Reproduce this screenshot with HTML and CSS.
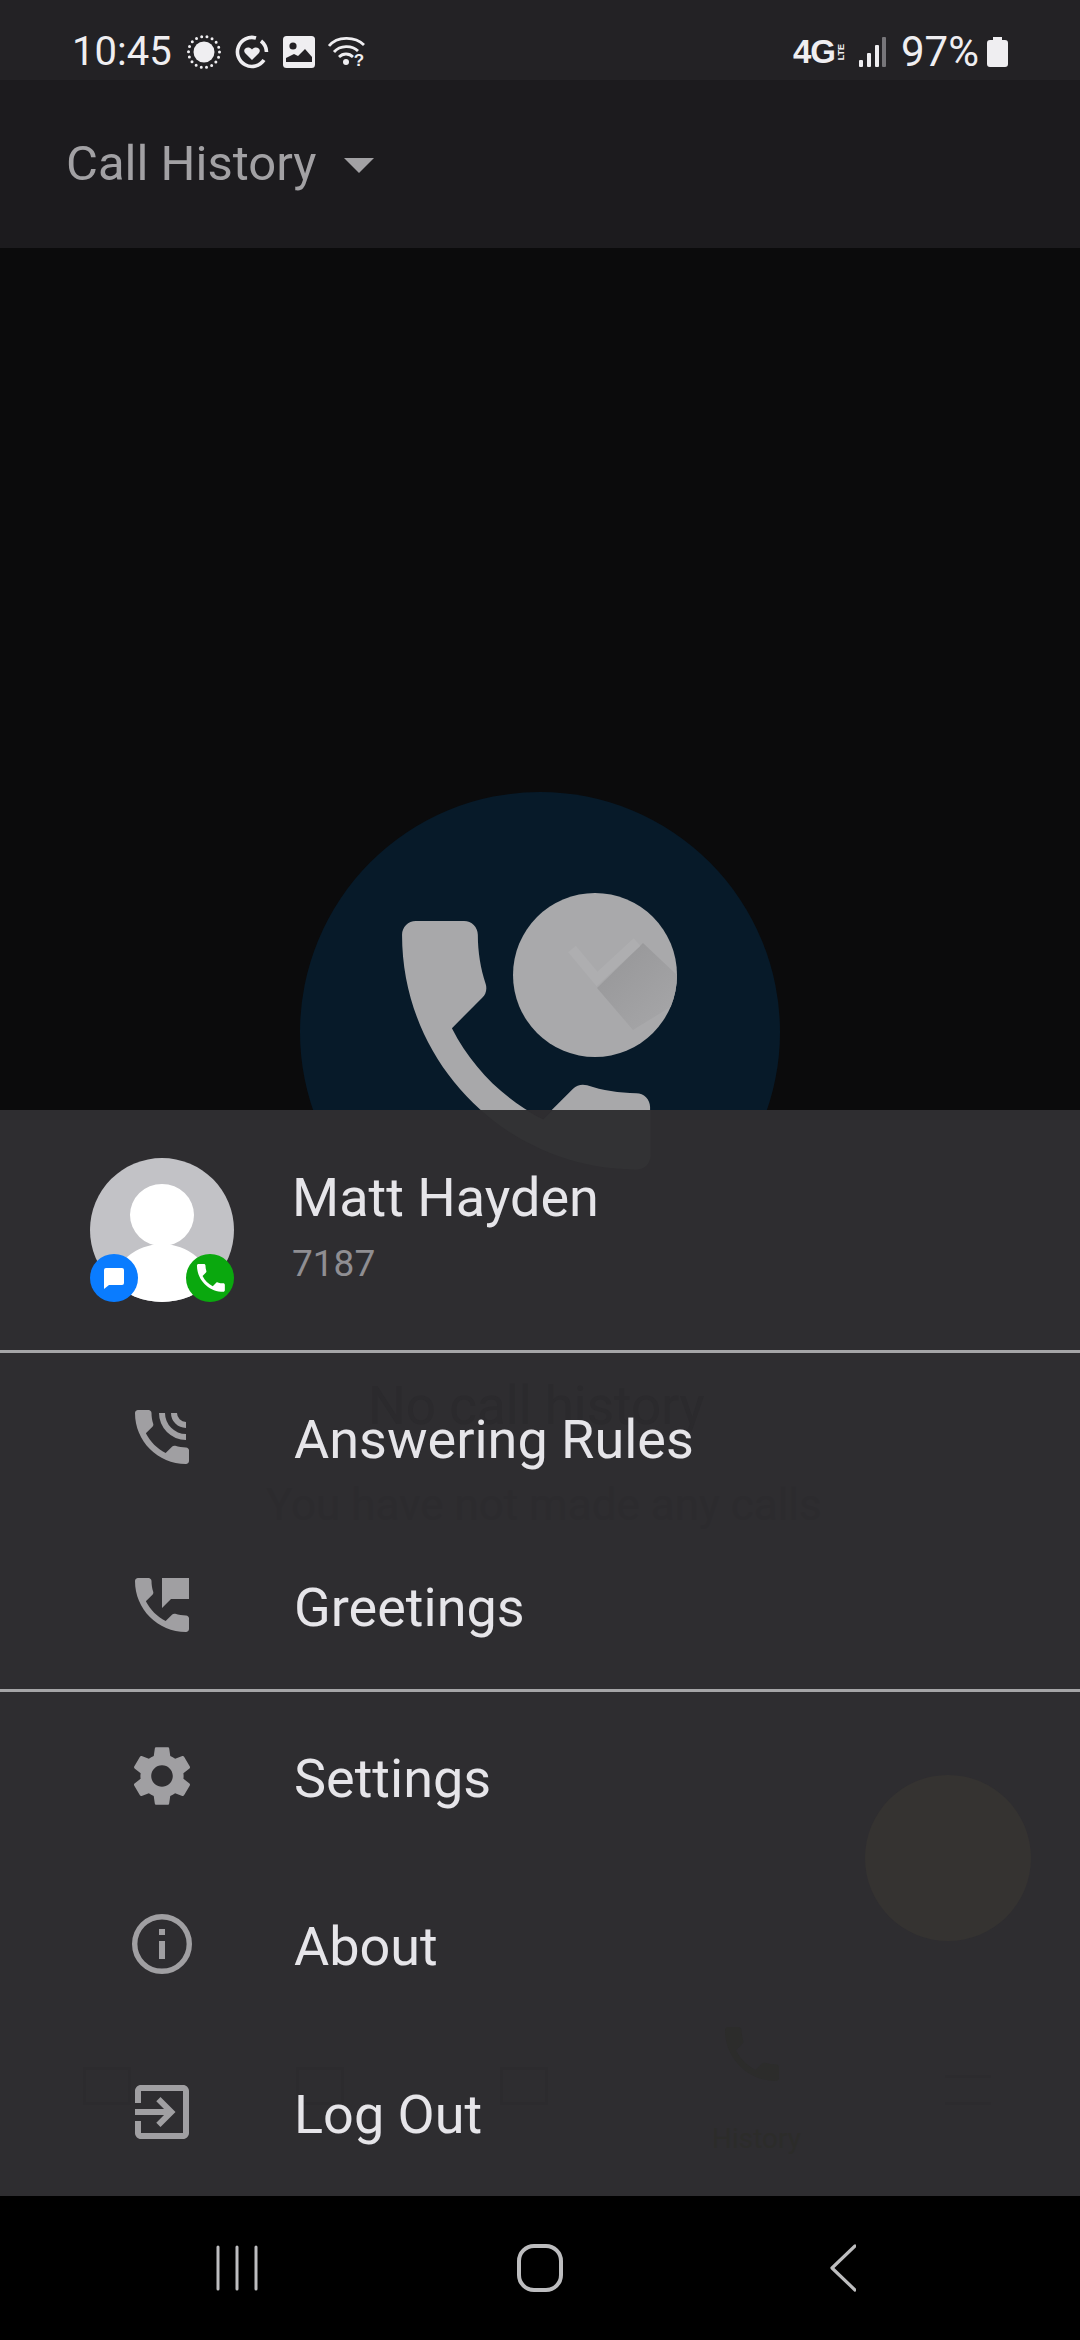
FILE: index.html
```html
<!DOCTYPE html>
<html lang="en">
<head>
<meta charset="utf-8">
<title>Call History</title>
<link rel="stylesheet" href="styles.css">
</head>
<body>
<div class="app">
  <div class="status">
    <div class="status-left">
      <span class="time">10:45</span>
      <svg class="st-sun" viewBox="0 0 36 36"><circle cx="18" cy="18" r="10.5" fill="#efeef1"/><circle cx="18" cy="18" r="15.5" fill="none" stroke="#efeef1" stroke-width="3" stroke-linecap="round" stroke-dasharray="0 5.4"/></svg>
      <svg class="st-heart" viewBox="0 0 36 36"><path d="M30 26A14.500 14.500 0 1 1 22 4" fill="none" stroke="#efeef1" stroke-width="3.600"/><path d="M27 7A14.500 14.500 0 0 1 32.500 18" fill="none" stroke="#efeef1" stroke-width="3.600"/><path d="M18 26l-7-7c-3-4 3-8 7-3.600 4-4.400 10-.4 7 3.600z" fill="#efeef1"/></svg>
      <svg class="st-img" viewBox="0 0 34 34"><rect x="1" y="1" width="32" height="32" rx="3.500" fill="#efeef1"/><circle cx="11" cy="11" r="3.600" fill="#232125"/><path d="M4 27v-4l8-4 4 2 7-7 7 8v5z" fill="#232125"/><path d="M4 27.500h26" stroke="#efeef1" stroke-width="1"/></svg>
      <svg class="st-wifi" viewBox="0 0 38 34"><g fill="none" stroke="#efeef1" stroke-width="2.800"><path d="M1 11C9 1 27 1 36 10"/><path d="M6 17C12 10 24 10 30 16"/><path d="M11 22C15 18 21 18 25 22"/></g><circle cx="18" cy="27" r="3" fill="#efeef1"/><text class="wifi-q" x="31" y="31">?</text></svg>
    </div>
    <div class="status-right">
      <span class="net"><span class="net-4g">4G</span><span class="net-lte">LTE</span></span>
      <svg class="st-bars" viewBox="0 0 27 30"><rect x="0" y="23" width="4" height="7" rx="1" fill="#efeef1"/><rect x="8" y="16" width="4" height="14" rx="1" fill="#efeef1"/><rect x="16" y="8" width="4" height="22" rx="1" fill="#efeef1"/><rect x="23" y="0" width="4" height="30" rx="1" fill="#77767a"/></svg>
      <span class="batt-pct">97%</span>
      <svg class="st-batt" viewBox="0 0 21 30"><path d="M6 0h9v3h3a3 3 0 0 1 3 3v21a3 3 0 0 1-3 3H3a3 3 0 0 1-3-3V6a3 3 0 0 1 3-3h3z" fill="#efeef1"/></svg>
    </div>
  </div>
  <header class="header">
    <span class="title">Call History</span>
    <span class="caret"></span>
  </header>
  <main class="main">
    <svg class="hero" viewBox="0 0 480 480">
      <defs>
        <clipPath id="clock"><circle cx="295" cy="183" r="82"/></clipPath>
        <linearGradient id="shade" x1="0" y1="0" x2="1" y2="1"><stop offset="0" stop-color="#959597"/><stop offset="1" stop-color="#a9a9ab"/></linearGradient>
      </defs>
      <circle cx="240" cy="240" r="240" fill="#071a29"/>
      <path transform="translate(60.700 87.600) scale(13.780)" fill="#a8a8aa" d="M20 15.500c-1.250 0-2.450-.2-3.570-.57-.35-.11-.74-.03-1.020.24l-2.200 2.200c-2.830-1.440-5.150-3.750-6.590-6.590l2.200-2.210c.28-.26.36-.65.25-1-.37-1.120-.57-2.320-.57-3.570 0-.55-.45-1-1-1H4c-.55 0-1 .45-1 1 0 9.390 7.610 17 17 17 .55 0 1-.45 1-1v-3.500c0-.55-.45-1-1-1z"/>
      <circle cx="295" cy="183" r="82" fill="#a9a9ab"/>
      <g clip-path="url(#clock)">
        <polygon points="297,196 343,151 395,200 333,238" fill="url(#shade)"/>
        <polyline points="272,157 297,187 337,150" fill="none" stroke="#aeaeb0" stroke-width="10"/>
      </g>
    </svg>
    <section class="sheet">
      <div class="ghosts" aria-hidden="true">
        <svg class="ghost-phone" viewBox="0 0 24 24"><path fill="#323234" d="M20 15.500c-1.250 0-2.450-.2-3.570-.57-.35-.11-.74-.03-1.020.24l-2.200 2.200c-2.830-1.440-5.150-3.750-6.590-6.590l2.200-2.210c.28-.26.36-.65.25-1-.37-1.120-.57-2.320-.57-3.570 0-.55-.45-1-1-1H4c-.55 0-1 .45-1 1 0 9.390 7.610 17 17 17 .55 0 1-.45 1-1v-3.500c0-.55-.45-1-1-1z"/></svg>
        <span class="ghost-title">No call history</span>
        <span class="ghost-sub">You have not made any calls</span>
        <span class="ghost-fab"></span>
        <span class="ghost-nav g1"></span>
        <span class="ghost-nav g2"></span>
        <span class="ghost-nav g3"></span>
        <svg class="ghost-call" viewBox="0 0 24 24"><path fill="#2c2c2b" d="M20 15.500c-1.250 0-2.450-.2-3.570-.57-.35-.11-.74-.03-1.020.24l-2.200 2.200c-2.830-1.440-5.150-3.750-6.590-6.590l2.200-2.210c.28-.26.36-.65.25-1-.37-1.120-.57-2.320-.57-3.570 0-.55-.45-1-1-1H4c-.55 0-1 .45-1 1 0 9.390 7.610 17 17 17 .55 0 1-.45 1-1v-3.500c0-.55-.45-1-1-1z"/></svg>
        <span class="ghost-label">History</span>
        <span class="ghost-menu"></span>
      </div>

      <div class="profile">
        <svg class="avatar" viewBox="0 0 144 144">
          <defs><clipPath id="av"><circle cx="72" cy="72" r="72"/></clipPath></defs>
          <circle cx="72" cy="72" r="72" fill="#c2c2c6"/>
          <g clip-path="url(#av)" fill="#fff"><ellipse cx="72" cy="57" rx="32" ry="31"/><ellipse cx="72" cy="128" rx="48" ry="42"/></g>
          <circle cx="24" cy="120" r="24" fill="#0a7cff"/>
          <path d="M16 110h16a2 2 0 0 1 2 2v13a2 2 0 0 1-2 2H19l-5 4v-19a2 2 0 0 1 2-2z" fill="#fff"/>
          <circle cx="120" cy="120" r="24" fill="#0aa80e"/>
          <path transform="translate(102.300 101.300) scale(1.550)" fill="#fff" d="M20 15.500c-1.250 0-2.450-.2-3.570-.57-.35-.11-.74-.03-1.020.24l-2.200 2.200c-2.830-1.440-5.150-3.750-6.590-6.590l2.200-2.210c.28-.26.36-.65.25-1-.37-1.120-.57-2.320-.57-3.570 0-.55-.45-1-1-1H4c-.55 0-1 .45-1 1 0 9.390 7.610 17 17 17 .55 0 1-.45 1-1v-3.500c0-.55-.45-1-1-1z"/>
        </svg>
        <div class="who">
          <div class="name">Matt Hayden</div>
          <div class="ext">7187</div>
        </div>
      </div>

      <div class="group">
        <div class="row">
          <svg class="ico" viewBox="0 0 24 24"><path d="M20 15.500c-1.250 0-2.450-.2-3.570-.57-.35-.11-.74-.03-1.020.24l-2.200 2.200c-2.830-1.440-5.150-3.750-6.590-6.590l2.200-2.210c.28-.26.36-.65.25-1-.37-1.120-.57-2.320-.57-3.570 0-.55-.45-1-1-1H4c-.55 0-1 .45-1 1 0 9.390 7.610 17 17 17 .55 0 1-.45 1-1v-3.500c0-.55-.45-1-1-1z"/><path d="M11 4a9 9 0 0 0 9 9v-2a7 7 0 0 1-7-7zM15 4a5 5 0 0 0 5 5V7a3 3 0 0 1-3-3z"/></svg>
          <span class="label">Answering Rules</span>
        </div>
        <div class="row">
          <svg class="ico" viewBox="0 0 24 24"><path d="M20 15.500c-1.250 0-2.450-.2-3.570-.57-.35-.11-.74-.03-1.020.24l-2.200 2.200c-2.830-1.440-5.150-3.750-6.590-6.590l2.200-2.210c.28-.26.36-.65.25-1-.37-1.120-.57-2.320-.57-3.570 0-.55-.45-1-1-1H4c-.55 0-1 .45-1 1 0 9.390 7.610 17 17 17 .55 0 1-.45 1-1v-3.500c0-.55-.45-1-1-1z"/><path d="M12 3h9v7h-6l-3 3z"/></svg>
          <span class="label">Greetings</span>
        </div>
      </div>

      <div class="group">
        <div class="row">
          <svg class="ico" viewBox="0 0 24 24"><path d="M19.140 12.940c.04-.3.06-.61.06-.94 0-.32-.02-.64-.07-.94l2.030-1.580c.18-.14.23-.41.12-.61l-1.920-3.320c-.12-.22-.37-.29-.59-.22l-2.390.96c-.5-.38-1.030-.7-1.620-.94l-.36-2.540c-.04-.24-.24-.41-.48-.41h-3.840c-.24 0-.43.17-.47.41l-.36 2.540c-.59.24-1.130.57-1.620.94l-2.390-.96c-.22-.08-.47 0-.59.22L2.740 8.870c-.12.21-.08.47.12.61l2.030 1.580c-.05.3-.09.63-.09.94s.02.64.07.94l-2.030 1.580c-.18.14-.23.41-.12.61l1.920 3.320c.12.22.37.29.59.22l2.390-.96c.5.38 1.030.7 1.620.94l.36 2.540c.05.24.24.41.48.41h3.840c.24 0 .44-.17.47-.41l.36-2.540c.59-.24 1.130-.56 1.620-.94l2.390.96c.22.08.47 0 .59-.22l1.920-3.320c.12-.22.07-.47-.12-.61l-2.010-1.580zM12 15.600c-1.980 0-3.600-1.620-3.600-3.600s1.620-3.600 3.600-3.600 3.600 1.620 3.600 3.600-1.620 3.600-3.600 3.600z"/></svg>
          <span class="label">Settings</span>
        </div>
        <div class="row">
          <svg class="ico" viewBox="0 0 24 24"><path d="M11 7h2v2h-2zm0 4h2v6h-2z"/><circle cx="12" cy="12" r="9.100" fill="none" stroke="#a09fa2" stroke-width="1.800"/></svg>
          <span class="label">About</span>
        </div>
        <div class="row">
          <svg class="ico" viewBox="0 0 24 24"><path d="M10.090 15.590L11.500 17l5-5-5-5-1.410 1.410L12.670 11H3v2h9.670l-2.580 2.590zM19 3H5c-1.110 0-2 .9-2 2v4h2V5h14v14H5v-4H3v4c0 1.100.89 2 2 2h14c1.100 0 2-.9 2-2V5c0-1.100-.9-2-2-2z"/></svg>
          <span class="label">Log Out</span>
        </div>
      </div>
    </section>
  </main>
  <nav class="sysnav">
    <svg class="nav-recents" viewBox="0 0 42 46"><g stroke="#bdbdbf" stroke-width="3" stroke-linecap="round"><path d="M2 2v42M21 2v42M40 2v42"/></g></svg>
    <svg class="nav-home" viewBox="0 0 46 48"><rect x="2" y="2" width="42" height="44" rx="15" fill="none" stroke="#bdbdbf" stroke-width="4"/></svg>
    <svg class="nav-back" viewBox="0 0 26 48"><path d="M25 2L2 24l23 22" fill="none" stroke="#bdbdbf" stroke-width="3.200" stroke-linecap="round" stroke-linejoin="round"/></svg>
  </nav>
</div>
</body>
</html>
```
FILE: styles.css
```css
* { box-sizing: border-box; }
html, body { margin: 0; padding: 0; background: #000; }
body { font-family: Roboto, "Liberation Sans", sans-serif; }

.app { width: 1080px; height: 2340px; display: flex; flex-direction: column; overflow: hidden; }

.status { height: 80px; padding: 24px 72px 0; background: #232225; display: flex; justify-content: space-between; align-items: center; color: #efeef1; flex: none; }
.status-left, .status-right { display: flex; align-items: center; }
.status-left { gap: 12px; }
.time { font-size: 40px; line-height: 48px; width: 102px; }
.st-sun, .st-heart { width: 36px; height: 36px; }
.st-img { width: 34px; height: 34px; }
.st-wifi { width: 38px; height: 34px; }
.wifi-q { font: 700 17px "Liberation Sans", sans-serif; fill: #efeef1; text-anchor: middle; }
.net { display: flex; align-items: center; width: 54px; height: 22px; margin-right: 12px; gap: 1px; }
.net-4g { font: 700 33px/22px "Liberation Sans", sans-serif; letter-spacing: -1px; }
.net-lte { font: 700 9px/10px "Liberation Sans", sans-serif; writing-mode: vertical-rl; transform: rotate(180deg); }
.st-bars { width: 27px; height: 30px; margin-right: 15px; }
.batt-pct { font-size: 42px; line-height: 48px; margin-right: 8px; }
.st-batt { width: 21px; height: 30px; }

.header { height: 168px; background: #1c1b1e; display: flex; align-items: center; padding-left: 66px; flex: none; }
.title { font-size: 49px; line-height: 60px; color: #a2a1a4; }
.caret { width: 0; height: 0; border-left: 15px solid transparent; border-right: 15px solid transparent; border-top: 15px solid #a2a1a4; margin-left: 28px; margin-top: 2px; }

.main { flex: 1; background: #0b0b0c; position: relative; display: flex; justify-content: center; padding-top: 544px; }
.hero { width: 480px; height: 480px; }

.sheet { position: absolute; left: 0; right: 0; top: 862px; height: 1086px; background: #2e2d30; overflow: hidden; color: #e6e5e9; }
.ghosts span, .ghosts svg { position: absolute; display: block; }
.ghost-phone { left: 361px; top: -230px; width: 331px; height: 331px; }
.ghost-title { left: 368px; top: 266px; font-size: 53px; line-height: 60px; color: #2b2a2d; white-space: nowrap; }
.ghost-sub { left: 266px; top: 372px; font-size: 44px; line-height: 46px; color: #2c2b2e; white-space: nowrap; }
.ghost-fab { left: 865px; top: 665px; width: 166px; height: 166px; border-radius: 50%; background: #353331; }
.ghost-nav { top: 957px; width: 48px; height: 38px; border: 3px solid #2c2b2e; }
.g1 { left: 83px; }
.g2 { left: 296px; }
.g3 { left: 500px; }
.ghost-call { left: 716px; top: 908px; width: 72px; height: 72px; }
.ghost-label { left: 712px; top: 1013px; font-size: 28px; line-height: 32px; color: #2c2c2a; }
.ghost-menu { left: 945px; top: 965px; width: 46px; height: 30px; border-top: 3px solid #2c2b2e; border-bottom: 3px solid #2c2b2e; }

.profile { position: relative; height: 240px; padding: 48px 0 0 90px; display: flex; gap: 58px; }
.avatar { width: 144px; height: 144px; flex: none; }
.who { display: flex; flex-direction: column; padding-top: 10px; }
.name { font-size: 54px; line-height: 60px; }
.ext { font-size: 37px; line-height: 44px; color: #8f8e92; margin-top: 14px; }

.group { position: relative; border-top: 3px solid #a5a5a7; }
.row { height: 168px; display: flex; align-items: center; padding-left: 126px; gap: 96px; }
.ico { width: 72px; height: 72px; flex: none; fill: #a09fa2; }
.label { font-size: 54px; line-height: 60px; position: relative; top: 3px; }

.sysnav { height: 144px; background: #000; flex: none; display: grid; grid-template-columns: repeat(3, 303px); padding: 0 85.5px; justify-items: center; align-items: center; }
.nav-recents { width: 42px; height: 46px; }
.nav-home { width: 46px; height: 48px; }
.nav-back { width: 26px; height: 48px; }
```
